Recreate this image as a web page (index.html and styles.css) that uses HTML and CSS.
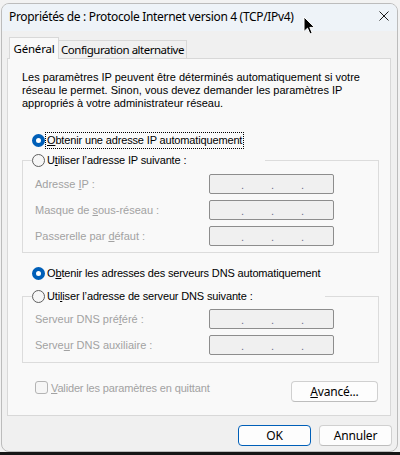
FILE: index.html
```html
<!DOCTYPE html>
<html lang="fr">
<head>
<meta charset="utf-8">
<title>Propriétés de : Protocole Internet version 4 (TCP/IPv4)</title>
<link rel="stylesheet" href="styles.css">
</head>
<body>
<div class="window">
  <div class="titlebar">
    <span class="title">Propriétés de : Protocole Internet version 4 (TCP/IPv4)</span>
    <svg class="close" width="10" height="10" viewBox="0 0 10 10"><path d="M0.5 0.5 L9.5 9.5 M9.5 0.5 L0.5 9.5" stroke="#1a1a1a" stroke-width="1" fill="none"/></svg>
  </div>
  <div class="content">
    <div class="tabs">
      <div class="tab active">Général</div>
      <div class="tab">Configuration alternative</div>
    </div>
    <div class="panel">
      <p class="desc">Les paramètres IP peuvent être déterminés automatiquement si votre<br>réseau le permet. Sinon, vous devez demander les paramètres IP<br>appropriés à votre administrateur réseau.</p>

      <div class="radio-row first"><span class="radio checked"></span><span class="focus rtext"><u>O</u>btenir une adresse IP automatiquement</span></div>

      <fieldset class="group g1">
        <legend class="legend l1"><span class="radio"></span><span class="rtext">U<u>t</u>iliser l’adresse IP suivante :</span></legend>
        <div class="field"><span class="lbl">Adresse <u>I</u>P :</span><span class="ip"><span class="seg s1"></span><span class="dot">.</span><span class="seg"></span><span class="dot">.</span><span class="seg"></span><span class="dot">.</span><span class="seg"></span></span></div>
        <div class="field"><span class="lbl">Masque de <u>s</u>ous-réseau :</span><span class="ip"><span class="seg s1"></span><span class="dot">.</span><span class="seg"></span><span class="dot">.</span><span class="seg"></span><span class="dot">.</span><span class="seg"></span></span></div>
        <div class="field"><span class="lbl">Passerelle par <u>d</u>éfaut :</span><span class="ip"><span class="seg s1"></span><span class="dot">.</span><span class="seg"></span><span class="dot">.</span><span class="seg"></span><span class="dot">.</span><span class="seg"></span></span></div>
      </fieldset>

      <div class="radio-row third"><span class="radio checked"></span><span class="rtext">O<u>b</u>tenir les adresses des serveurs DNS automatiquement</span></div>

      <fieldset class="group g2">
        <legend class="legend l2"><span class="radio"></span><span class="rtext">Uti<u>l</u>iser l’adresse de serveur DNS suivante :</span></legend>
        <div class="field"><span class="lbl">Serveur DNS pré<u>f</u>éré :</span><span class="ip"><span class="seg s1"></span><span class="dot">.</span><span class="seg"></span><span class="dot">.</span><span class="seg"></span><span class="dot">.</span><span class="seg"></span></span></div>
        <div class="field"><span class="lbl">Serve<u>u</u>r DNS auxiliaire :</span><span class="ip"><span class="seg s1"></span><span class="dot">.</span><span class="seg"></span><span class="dot">.</span><span class="seg"></span><span class="dot">.</span><span class="seg"></span></span></div>
      </fieldset>

      <div class="bottom-row">
        <div class="check-row"><span class="checkbox"></span><span class="ctext"><u>V</u>alider les paramètres en quittant</span></div>
        <button class="btn adv"><u>A</u>vancé...</button>
      </div>
    </div>
    <div class="buttons">
      <button class="btn ok">OK</button>
      <button class="btn">Annuler</button>
    </div>
  </div>
</div>
<svg class="cursor" width="13" height="20" viewBox="0 0 13 20"><path d="M1 1 L1 15.5 L4.5 12.2 L7 18 L9.2 17 L6.8 11.4 L11.5 11.4 Z" fill="#000" stroke="#fff" stroke-width="1" stroke-linejoin="round"/></svg>
</body>
</html>
```
FILE: styles.css
```css
html {
  background: linear-gradient(to bottom, #f2f2f2 0, #f2f2f2 452px, #161616 452px);
  height: 455px;
}
body {
  margin: 0;
  height: 455px;
  overflow: hidden;
  position: relative;
  font-family: "Liberation Sans", Arial, sans-serif;
}
.window {
  box-sizing: border-box;
  margin: 3px 0 0 1px;
  width: 397px;
  height: 449px;
  border: 1px solid #bcbcbc;
  border-radius: 8px;
  background: #f0f0f0;
  overflow: hidden;
}
.titlebar {
  height: 27px;
  background: #eef3f8;
  display: flex;
  align-items: center;
  justify-content: space-between;
  padding: 0 7px 0 7px;
}
.title {
  font-family: "Noto Sans", sans-serif;
  font-size: 12px;
  letter-spacing: -0.33px;
  color: #000;
  margin-top: -2px;
  white-space: nowrap;
}
.close {
  margin-right: 1px;
  margin-top: -3px;
}
.content {
  padding: 6px 6px 0 5px;
}
.tabs {
  display: flex;
  align-items: flex-end;
  height: 21px;
  padding-left: 2px;
  font-family: "Noto Sans", sans-serif;
  font-size: 11.5px;
  letter-spacing: -0.5px;
  white-space: nowrap;
}
.tab {
  box-sizing: border-box;
  height: 18px;
  border: 1px solid #d8d8d8;
  border-bottom: none;
  background: #f0f0f0;
  padding: 0 4px;
  line-height: 17px;
  margin-left: -1px;
  color: #000;
}
.tab.active {
  height: 22px;
  margin-bottom: -1px;
  background: #f9f9f9;
  position: relative;
  z-index: 1;
  width: 50px;
  text-align: center;
  padding: 0;
  line-height: 21px;
  margin-left: 0;
  letter-spacing: -0.2px;
}
.tab + .tab {
  width: 129px;
  text-align: center;
  padding: 0;
}
.panel {
  box-sizing: border-box;
  height: 358px;
  border: 1px solid #d8d8d8;
  background: #f9f9f9;
  font-size: 11px;
  color: #000;
}
.desc {
  margin: 12px 0 0 14px;
  line-height: 13px;
}
.radio-row {
  display: flex;
  align-items: center;
  height: 16px;
  margin-left: 24px;
}
.radio-row.first {
  margin-top: 22px;
}
.radio-row.third {
  margin-top: 12px;
}
.rtext {
  letter-spacing: -0.15px;
  white-space: nowrap;
}
.radio {
  box-sizing: border-box;
  width: 13px;
  height: 13px;
  border-radius: 50%;
  border: 1px solid #5f5f5f;
  background: #f6f6f6;
  margin-right: 2px;
  flex: none;
}
.radio.checked {
  border: 4px solid #005fb8;
  background: #fff;
}
.focus {
  outline: 1px dotted #000;
  outline-offset: 0;
  padding: 0 1px;
  margin-left: -1px;
  line-height: 15px;
}
.group {
  margin: 4px 0 0 14px;
  padding: 6px 0 6px 12px;
  width: 357px;
  box-sizing: border-box;
  border: 1px solid #dcdcdc;
  min-width: 0;
}
.g2 {
  margin-top: 7px;
  padding-top: 5px;
  padding-bottom: 7px;
}
.legend {
  display: flex;
  align-items: center;
  height: 16px;
  padding: 0;
  margin-left: -3px;
  background: #f9f9f9;
  box-sizing: border-box;
}
.l1 { width: 233px; }
.l2 { width: 293px; }
.field {
  display: flex;
  align-items: center;
  height: 20px;
  color: #a2a2a2;
}
.field + .field {
  margin-top: 6px;
}
.lbl {
  width: 174px;
  flex: none;
}
.ip {
  box-sizing: border-box;
  width: 125px;
  height: 20px;
  border: 1px solid #8d8d8d;
  border-radius: 2px;
  background: #f0f0f0;
  display: flex;
  align-items: center;
  color: #6e6e8c;
}
.seg { width: 28px; }
.seg.s1 { width: 31px; }
.dot {
  width: 2px;
  text-align: center;
  line-height: 10px;
  margin-top: 1px;
  font-size: 11px;
}
.bottom-row {
  display: flex;
  justify-content: space-between;
  align-items: flex-start;
  margin: 18px 12px 0 27px;
}
.check-row {
  display: flex;
  align-items: center;
  height: 13px;
  color: #a2a2a2;
}
.ctext {
  letter-spacing: -0.15px;
  white-space: nowrap;
}
.checkbox {
  box-sizing: border-box;
  width: 13px;
  height: 13px;
  border: 1px solid #b4b4b4;
  border-radius: 3px;
  background: #f6f6f6;
  margin-right: 3px;
}
.btn {
  box-sizing: border-box;
  height: 21px;
  width: 73px;
  border: 1px solid #d0d0d0;
  border-bottom-color: #bdbdbd;
  border-radius: 4px;
  background: #fdfdfd;
  font-family: "Noto Sans", sans-serif;
  font-size: 12px;
  letter-spacing: -0.2px;
  color: #000;
  padding: 0;
  line-height: 18px;
}
.btn.adv {
  width: 87px;
}
.btn.ok {
  border: 1px solid #005fb8;
}
.buttons {
  display: flex;
  justify-content: flex-end;
  gap: 8px;
  margin: 9px -1px 0 0;
}
.cursor {
  position: absolute;
  left: 303px;
  top: 16px;
}
```
